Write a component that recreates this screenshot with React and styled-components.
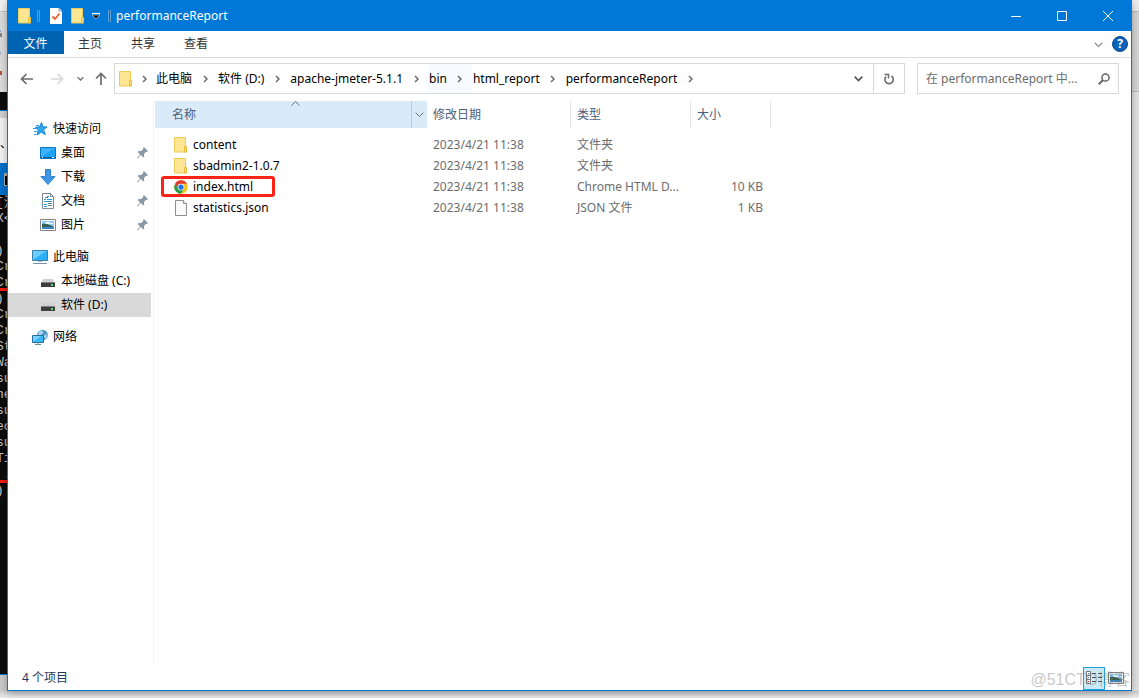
import React, { useState } from "react";
import styled, { createGlobalStyle } from "styled-components";

const quickAccess = [
  { name: "桌面", icon: "desktop" },
  { name: "下载", icon: "download" },
  { name: "文档", icon: "document" },
  { name: "图片", icon: "picture" },
];

const drives = [
  { name: "本地磁盘 (C:)" },
  { name: "软件 (D:)", selected: true },
];

const crumbs = [
  "此电脑", "软件 (D:)", "apache-jmeter-5.1.1", "bin", "html_report", "performanceReport",
];

const files = [
  { name: "content", icon: "folder", date: "2023/4/21 11:38", type: "文件夹", size: "" },
  { name: "sbadmin2-1.0.7", icon: "folder", date: "2023/4/21 11:38", type: "文件夹", size: "" },
  { name: "index.html", icon: "chrome", date: "2023/4/21 11:38", type: "Chrome HTML D...", size: "10 KB", marked: true },
  { name: "statistics.json", icon: "file", date: "2023/4/21 11:38", type: "JSON 文件", size: "1 KB" },
];

const consoleLines = [
  "[注", "X<c", "", ")", "Cr", "Cr", ")", "Cr", "Cr", "St", "Wa", "su", "ne", "su", "ec", "su", "Ti", " .", ")",
];

const FolderIcon = () => (
  <svg width="14" height="16" viewBox="0 0 14 16">
    <path d="M.5.5h11v9h1v5.500h-12z" fill="#ffe693" stroke="#eccb57" />
    <path d="M10.500 15V9.500h2V15z" fill="#ffe07a" stroke="#e6bd3e" />
  </svg>
);

const FileIcon = () => (
  <svg width="14" height="16" viewBox="0 0 14 16">
    <path d="M1.500.5h8l3 3v12h-11z" fill="#fafafa" stroke="#8e8e8e" />
    <path d="M9.500.5v3h3" fill="#fff" stroke="#8e8e8e" />
  </svg>
);

const ChromeIcon = () => (
  <svg width="14" height="14" viewBox="0 0 48 48">
    <circle cx="24" cy="24" r="23" fill="#fbc116" />
    <path d="M4 12.500A23 23 0 0 1 44 12.500H24L14 30z" fill="#e33b2e" />
    <path d="M4 12.500A23 23 0 0 0 24 47L34 30 14 30z" fill="#269b49" />
    <circle cx="24" cy="24" r="11.500" fill="#fff" />
    <circle cx="24" cy="24" r="9" fill="#1a73e8" />
  </svg>
);

const StarIcon = () => (
  <svg width="16" height="16" viewBox="0 0 16 16">
    <path d="M9.500 1.500l1.300 4.300 4.200.2-3.500 2.800 1.800 4.900-4-2.600L5 14l1.300-5L3.500 6.300l4-.4z" fill="#2fa8f4" stroke="#1583cf" />
    <path d="M4 4.500h3M1 7.500h4M2 10.500h3M2 13.500h2" stroke="#2a9de8" />
  </svg>
);

const DesktopIcon = () => (
  <svg width="16" height="16" viewBox="0 0 16 16">
    <path d="M.5 2.500h15v11H.5z" fill="#1ba1f5" stroke="#0b74bd" />
    <path d="M1 3h14L1 12z" fill="#3db3ff" />
    <path d="M1 12.500h14" stroke="#0a5b96" />
    <path d="M2 12.500h1M12 12.500h2" stroke="#fff" />
  </svg>
);

const DownloadIcon = () => (
  <svg width="16" height="16" viewBox="0 0 16 16">
    <path d="M5.500.5h5v7h4.500L8 15.500.9 7.500h4.600z" fill="#3f97e3" stroke="#2e82cf" />
  </svg>
);

const DocumentIcon = () => (
  <svg width="16" height="16" viewBox="0 0 16 16">
    <path d="M2.500.5h8l3 3v12h-11z" fill="#fff" stroke="#7d8a94" />
    <path d="M10.500.5v3h3" fill="none" stroke="#7d8a94" />
    <path d="M7 3.500h2M4 6.500h2M7 6.500h5M4 8.500h8M4 11.500h3M4 13.500h3" stroke="#2e94d8" />
    <path d="M5 4.500h3M8 10.500h4M8 12.500h4" stroke="#668191" />
  </svg>
);

const PictureIcon = () => (
  <svg width="16" height="16" viewBox="0 0 16 16">
    <path d="M.5 2.500h15v11H.5z" fill="#fff" stroke="#858585" />
    <path d="M2 4h12v8H2z" fill="#8fc9ef" />
    <path d="M5 5h5v1h3v1H6z" fill="#e8f5fc" />
    <path d="M2 7c4-1 8 1 12 3v1H2z" fill="#33604e" />
    <path d="M2 10h12v2H2z" fill="#3a86c8" />
  </svg>
);

const ComputerIcon = () => (
  <svg width="16" height="16" viewBox="0 0 16 16">
    <path d="M.5 1.500h15v10H.5z" fill="#2caef8" stroke="#3c7fa8" />
    <path d="M1 2h13L1 11z" fill="#6ccbff" />
    <path d="M6 12.500h4" stroke="#aac0cb" />
    <path d="M1 14.500h14" stroke="#7694a5" />
  </svg>
);

const DriveIcon = () => (
  <svg width="14" height="16" viewBox="0 0 14 16">
    <path d="M2.500 6h9L14 10H0z" fill="#d0d0d0" />
    <path d="M0 9.500h14V14H0z" fill="#3d3d3d" />
    <path d="M0 9.500h14" stroke="#818181" />
    <path d="M10 12h2" stroke="#4ee05a" strokeWidth="2" />
  </svg>
);

const NetworkIcon = () => (
  <svg width="16" height="16" viewBox="0 0 16 16">
    <circle cx="10.500" cy="6" r="5.300" fill="#4a94c3" />
    <path d="M7 2.500q3-2 4 0t-1 3l-4 1zM11 7l4-2-1 5z" fill="#a8d6ed" />
    <path d="M.5 6.500h11v7H.5z" fill="#3cb6f7" stroke="#246f9f" />
    <path d="M1 7h8l-8 6z" fill="#7bd1ff" />
    <path d="M3 15.500h6M5 14h2" stroke="#668b9f" />
  </svg>
);

const PinIcon = () => (
  <svg width="11" height="12" viewBox="0 0 11 12">
    <path d="M7 0l4 4-1 1-1-.3L7 7l.2 2.500-1 1-2.500-2.500L.7 11.300 0 11.500l.2-.8L3 7.500.7 5l1-1L4.200 4l2-2L6 1z" fill="#8c99a5" />
  </svg>
);

const ChevronRight = () => (
  <svg width="5" height="8" viewBox="0 0 5 8">
    <path d="M1 1l3 3-3 3" fill="none" stroke="#6b6b6b" strokeWidth="1.500" />
  </svg>
);

const ChevronDown = ({ color = "#6b6b6b", size = 9, weight = 1 }) => (
  <svg width={size} height={size} viewBox="0 0 9 9">
    <path d="M.7 2.700L4.500 6.500l3.800-3.800" fill="none" stroke={color} strokeWidth={weight} />
  </svg>
);

const ArrowIcon = ({ color = "#6d6d6d", turn = 0 }) => (
  <svg width="14" height="14" viewBox="0 0 14 14">
    <path
      d="M13 7H2M6.500 2L1.500 7l5 5"
      fill="none"
      stroke={color}
      strokeWidth="1.700"
      transform={`rotate(${turn} 7 7)`}
    />
  </svg>
);

const RefreshIcon = () => (
  <svg width="12" height="12" viewBox="0 0 12 12">
    <path d="M8.500 3A4.200 4.200 0 1 1 3 3.600" fill="none" stroke="#6b6b6b" strokeWidth="1.600" />
    <path d="M1.500 1.500h4v4" fill="none" stroke="#6b6b6b" strokeWidth="1.500" />
  </svg>
);

const SearchIcon = () => (
  <svg width="12" height="12" viewBox="0 0 12 12">
    <circle cx="7.500" cy="4.500" r="3.600" fill="none" stroke="#666" strokeWidth="1.500" />
    <path d="M5 7L.8 11.200" stroke="#666" strokeWidth="2" />
  </svg>
);

const icons = {
  folder: FolderIcon,
  file: FileIcon,
  chrome: ChromeIcon,
  desktop: DesktopIcon,
  download: DownloadIcon,
  document: DocumentIcon,
  picture: PictureIcon,
};

export default function App() {
  const [query, setQuery] = useState("");
  const [view, setView] = useState("details");

  return (
    <Desktop>
      <GlobalStyle />
      <Backdrop aria-hidden="true">
        <BackPanel>
          <svg width="3" height="46" viewBox="0 0 3 46">
            <path d="M0 1h1" stroke="#8fa6c0" strokeWidth="2" />
            <path d="M0 5h2" stroke="#858585" strokeWidth="4" />
            <path d="M0 23h1" stroke="#aab4cc" strokeWidth="4" />
            <path d="M0 43h2" stroke="#b5543c" strokeWidth="4" />
          </svg>
        </BackPanel>
        <BackTop />
        <BackPage>、</BackPage>
        <BackTitle><i /></BackTitle>
        <Console>
          {consoleLines.map((line, i) => (
            <ConsoleLine key={i} $underlined={i === 5 || i === 17}>{line}</ConsoleLine>
          ))}
        </Console>
      </Backdrop>

      <Window>
        <TitleBar>
          <FolderIcon />
          <Separator />
          <QuickTool aria-label="属性">
            <svg width="14" height="16" viewBox="0 0 14 16">
              <path d="M1 0h9l3 3v13H1z" fill="#fff" />
              <path d="M10 0v3h3" fill="none" stroke="#8e8e8e" />
              <path d="M3.500 8.500l2.500 2.500 4.500-5.500" fill="none" stroke="#e8602c" strokeWidth="1.800" />
            </svg>
          </QuickTool>
          <QuickTool aria-label="新建文件夹"><FolderIcon /></QuickTool>
          <QuickTool $small aria-label="自定义快速访问工具栏">
            <svg width="8" height="8" viewBox="0 0 8 8">
              <path d="M0 1.500h8" stroke="#fff" />
              <path d="M0 3h8L4 7z" fill="#111" stroke="#fff" strokeWidth=".500" />
            </svg>
          </QuickTool>
          <Separator />
          <Title>performanceReport</Title>
          <WindowButton aria-label="最小化">
            <svg width="10" height="10" viewBox="0 0 10 10"><path d="M0 5.500h10" stroke="#fff" /></svg>
          </WindowButton>
          <WindowButton aria-label="最大化">
            <svg width="10" height="10" viewBox="0 0 10 10"><path d="M.5.5h9v9h-9z" fill="none" stroke="#fff" /></svg>
          </WindowButton>
          <WindowButton aria-label="关闭">
            <svg width="10" height="10" viewBox="0 0 10 10"><path d="M0 0l10 10M10 0L0 10" stroke="#fff" /></svg>
          </WindowButton>
        </TitleBar>

        <Ribbon>
          <Tab $file>文件</Tab>
          <Tab>主页</Tab>
          <Tab>共享</Tab>
          <Tab>查看</Tab>
          <RibbonEnd>
            <IconButton aria-label="展开功能区"><ChevronDown color="#999" weight={1.4} /></IconButton>
            <HelpButton aria-label="帮助">?</HelpButton>
          </RibbonEnd>
        </Ribbon>

        <NavBar>
          <NavButtons>
            <IconButton aria-label="后退"><ArrowIcon /></IconButton>
            <IconButton aria-label="前进"><ArrowIcon color="#d8d8d8" turn={180} /></IconButton>
            <RecentGroup>
              <IconButton aria-label="最近浏览的位置"><ChevronDown size={7} weight={1.7} /></IconButton>
              <IconButton aria-label="上移"><ArrowIcon turn={90} /></IconButton>
            </RecentGroup>
          </NavButtons>
          <AddressBox>
            <FolderIcon />
            <Arrow><ChevronRight /></Arrow>
            {crumbs.map((crumb) => (
              <Crumb key={crumb} $hover={crumb === "bin"}>
                <button>{crumb}</button>
                <Arrow $wide><ChevronRight /></Arrow>
              </Crumb>
            ))}
            <DropButton aria-label="以前的位置"><ChevronDown weight={1.7} color="#555" /></DropButton>
            <RefreshButton aria-label="刷新"><RefreshIcon /></RefreshButton>
          </AddressBox>
          <SearchBox>
            <input
              type="text"
              aria-label="搜索"
              placeholder="在 performanceReport 中..."
              value={query}
              onChange={(e) => setQuery(e.target.value)}
            />
            <SearchIcon />
          </SearchBox>
        </NavBar>

        <Body>
          <Sidebar>
            <Group>
              <SideItem><StarIcon />快速访问</SideItem>
              {quickAccess.map((item) => {
                const Icon = icons[item.icon];
                return (
                  <SideItem key={item.name} $nested>
                    <Icon />
                    <span>{item.name}</span>
                    <PinIcon />
                  </SideItem>
                );
              })}
            </Group>
            <Group>
              <SideItem><ComputerIcon />此电脑</SideItem>
              {drives.map((drive) => (
                <SideItem key={drive.name} $nested $selected={drive.selected}>
                  <DriveSlot><DriveIcon /></DriveSlot>
                  {drive.name}
                </SideItem>
              ))}
            </Group>
            <Group>
              <SideItem><NetworkIcon />网络</SideItem>
            </Group>
          </Sidebar>

          <Main>
            <FileTable>
              <colgroup>
                <col width="272" />
                <col width="144" />
                <col width="120" />
                <col width="80" />
              </colgroup>
              <thead>
                <tr>
                  <HeadCell $sorted>
                    <SortMark>
                      <svg width="9" height="5" viewBox="0 0 9 5"><path d="M.5 4.500l4-4 4 4" fill="none" stroke="#6b6b6b" /></svg>
                    </SortMark>
                    <HeadInner>
                      <span>名称</span>
                      <FilterButton aria-label="筛选"><ChevronDown /></FilterButton>
                    </HeadInner>
                  </HeadCell>
                  <HeadCell>修改日期</HeadCell>
                  <HeadCell>类型</HeadCell>
                  <HeadCell>大小</HeadCell>
                </tr>
              </thead>
              <tbody>
                {files.map((file) => {
                  const Icon = icons[file.icon];
                  return (
                    <tr key={file.name}>
                      <NameCell>
                        <FileName $marked={file.marked}><Icon />{file.name}</FileName>
                      </NameCell>
                      <Cell>{file.date}</Cell>
                      <Cell>{file.type}</Cell>
                      <Cell $right>{file.size}</Cell>
                    </tr>
                  );
                })}
              </tbody>
            </FileTable>
          </Main>
        </Body>

        <StatusBar>
          <span>4 个项目</span>
          <ViewButtons>
            <ViewButton aria-label="详细信息" $active={view === "details"} onClick={() => setView("details")}>
              <svg width="16" height="14" viewBox="0 0 16 14">
                <path d="M.5.5h4v12h-4zM.5 4.500h4M.5 8.500h4" fill="#fff" stroke="#777" />
                <path d="M6 2.500h4M12 2.500h4M6 6.500h4M12 6.500h4M6 10.500h4M12 10.500h4" stroke="#555" />
                <path d="M2 2.500h1M2 6.500h1" stroke="#337ec0" />
                <path d="M2 10.500h1" stroke="#d22" />
              </svg>
            </ViewButton>
            <ViewButton aria-label="大图标" $active={view === "icons"} onClick={() => setView("icons")}>
              <PictureIcon />
            </ViewButton>
          </ViewButtons>
        </StatusBar>
      </Window>

      <RightEdge aria-hidden="true" />
      <Watermark>@51CTO博客</Watermark>
    </Desktop>
  );
}

const GlobalStyle = createGlobalStyle`
  * {
    box-sizing: border-box;
  }

  body {
    margin: 0;
    overflow: hidden;
    background: #e4e4e4;
  }

  body, button, input {
    font-family: "Noto Sans", "Noto Sans CJK SC", sans-serif;
    font-size: 12px;
    line-height: 16px;
  }

  button {
    margin: 0;
    padding: 0;
    border: none;
    background: none;
    color: inherit;
  }

  svg {
    display: block;
    flex: none;
  }
`;

const Desktop = styled.div`
  position: relative;
  display: grid;
  grid-template-columns: 7px minmax(0, 1fr) 7px;
  height: 100vh;
  padding-bottom: 7px;
  background: linear-gradient(to top, #ededed, #c9c9c9 8px);
`;

const Backdrop = styled.div`
  display: flex;
  flex-direction: column;
  min-width: 0;
  padding-bottom: 16px;
`;

const BackPanel = styled.div`
  height: 92px;
  flex: none;
  padding-top: 30px;
  background: linear-gradient(#f0f0f0 11px, #c4c4c4 11px, #c4c4c4 12px, #dcdcdc 12px);
`;

const BackTop = styled.div`
  height: 26px;
  flex: none;
  background: linear-gradient(#0c0c0c 18px, #0078d7 18px, #0078d7 19px, #d0d0d0 19px);
`;

const BackPage = styled.div`
  height: 45px;
  flex: none;
  padding-top: 18px;
  background: #f3f3f3;
`;

const BackTitle = styled.div`
  height: 32px;
  flex: none;
  padding: 10px 0 0 4px;
  background: #0070c9;

  i {
    display: block;
    width: 16px;
    height: 13px;
    border: 1px solid #aaa;
    border-top-width: 3px;
    background: #000;
  }
`;

const Console = styled.div`
  flex: 1;
  background: #0c0c0c;
  border-bottom: 1px solid #0078d7;
  color: #c4c4c4;
`;

const ConsoleLine = styled.div`
  height: 16px;
  border-bottom: ${(p) => (p.$underlined ? "3px solid #f01c12" : "none")};
  font-family: "Liberation Mono", "Noto Sans CJK SC", monospace;
  font-size: 13px;
  text-indent: -4px;
  white-space: pre;
`;

/* sits on top of the console behind it */
const Window = styled.section`
  display: flex;
  flex-direction: column;
  min-width: 0;
  z-index: 1;
  background: #fff;
  border: 1px solid #0078d7;
  border-top: none;
  box-shadow: 0 2px 8px rgba(0, 0, 0, 0.3);
`;

const TitleBar = styled.header`
  display: flex;
  align-items: center;
  height: 31px;
  flex: none;
  padding-left: 10px;
  background: #0078d7;
  color: #fff;
`;

const Separator = styled.span`
  width: 3px;
  height: 12px;
  margin: 0 5px;
  border: 1px solid #5e9fd6;
  border-width: 0 1px;
`;

const QuickTool = styled.button`
  display: flex;
  justify-content: center;
  width: ${(p) => (p.$small ? "14px" : "22px")};
`;

const Title = styled.span`
  flex: 1;
`;

const WindowButton = styled.button`
  display: flex;
  align-items: center;
  justify-content: center;
  width: 46px;
  height: 31px;
`;

const Ribbon = styled.nav`
  display: flex;
  align-items: flex-start;
  height: 27px;
  flex: none;
  border-bottom: 1px solid #dadbdc;
  color: #333;
`;

const Tab = styled.button`
  width: ${(p) => (p.$file ? "56px" : "53px")};
  height: 23px;
  padding: 2px 1px 0 0;
  background: ${(p) => (p.$file ? "#0063b1" : "none")};
  color: ${(p) => (p.$file ? "#fff" : "inherit")};
`;

const RibbonEnd = styled.div`
  display: flex;
  align-items: center;
  gap: 9px;
  height: 26px;
  margin-left: auto;
  padding-right: 3px;
`;

const IconButton = styled.button`
  display: flex;
`;

const HelpButton = styled.button`
  width: 16px;
  height: 16px;
  border: 1px solid #0a4a86;
  border-radius: 50%;
  background: #0a64bd;
  color: #fff;
  font-weight: bold;
  line-height: 14px;
`;

const NavBar = styled.div`
  display: flex;
  align-items: center;
  height: 43px;
  flex: none;
  padding: 0 12px 2px 0;
`;

const NavButtons = styled.div`
  display: flex;
  align-items: center;
  gap: 16px;
  width: 106px;
  padding-left: 12px;
`;

const RecentGroup = styled.span`
  display: flex;
  align-items: center;
  gap: 10px;
  margin-left: -3px;
`;

const AddressBox = styled.div`
  display: flex;
  align-items: center;
  flex: 1;
  min-width: 0;
  height: 31px;
  padding-left: 4px;
  border: 1px solid #d9d9d9;
  color: #000;
`;

const Arrow = styled.span`
  display: flex;
  justify-content: center;
  width: ${(p) => (p.$wide ? "24px" : "22px")};
`;

const Crumb = styled.span`
  display: flex;
  align-items: center;
  height: 29px;
  background: ${(p) => (p.$hover ? "#f7fbff" : "none")};

  button {
    padding: 0 1px;
    white-space: nowrap;
  }
`;

const DropButton = styled.button`
  display: flex;
  align-items: center;
  justify-content: center;
  width: 30px;
  height: 29px;
  margin-left: auto;
`;

const RefreshButton = styled.button`
  display: flex;
  align-items: center;
  justify-content: center;
  width: 31px;
  height: 29px;
  border-left: 1px solid #d9d9d9;
`;

const SearchBox = styled.label`
  display: flex;
  align-items: center;
  width: 202px;
  height: 31px;
  margin-left: 12px;
  padding: 0 8px;
  border: 1px solid #d9d9d9;

  input {
    flex: 1;
    min-width: 0;
    padding: 0;
    border: none;
    outline: none;
    color: #000;
  }

  input::placeholder {
    color: #6d6d6d;
  }
`;

const Body = styled.div`
  display: flex;
  flex: 1;
  min-height: 0;
`;

const Sidebar = styled.aside`
  width: 146px;
  flex: none;
  padding: 16px 2px 0 0;
  border-right: 1px solid #f3f3f3;
`;

const Group = styled.div`
  margin-bottom: 8px;
`;

const SideItem = styled.div`
  display: flex;
  align-items: center;
  gap: 5px;
  height: 24px;
  padding: 0 3px 0 ${(p) => (p.$nested ? "32px" : "24px")};
  background: ${(p) => (p.$selected ? "#d9d9d9" : "none")};
  color: #000;
  white-space: nowrap;

  span + svg {
    margin-left: auto;
  }
`;

const DriveSlot = styled.span`
  display: flex;
  justify-content: center;
  width: 16px;
`;

const Main = styled.main`
  flex: 1;
  min-width: 0;
  padding-left: 1px;
`;

const FileTable = styled.table`
  width: 616px;
  table-layout: fixed;
  border-collapse: separate;
  border-spacing: 0;

  thead::after {
    content: "";
    display: table-row;
    height: 6px;
  }
`;

const HeadCell = styled.th`
  position: relative;
  height: 27px;
  padding: 0 0 0 ${(p) => (p.$sorted ? "17px" : "6px")};
  border-right: ${(p) => (p.$sorted ? "none" : "1px solid #e5e5e5")};
  background: ${(p) => (p.$sorted ? "#d9ebf9" : "none")};
  color: #4c607a;
  font-weight: normal;
  text-align: left;
`;

const SortMark = styled.span`
  position: absolute;
  top: 0;
  left: 50%;
`;

const HeadInner = styled.div`
  display: flex;
  align-items: center;
  justify-content: space-between;
`;

const FilterButton = styled.button`
  display: flex;
  align-items: center;
  justify-content: center;
  width: 16px;
  height: 27px;
  border-left: 1px solid #b9cfdf;
`;

const Cell = styled.td`
  height: 21px;
  padding: 0 8px 0 6px;
  overflow: hidden;
  color: #6d6d6d;
  text-align: ${(p) => (p.$right ? "right" : "left")};
  text-overflow: ellipsis;
  white-space: nowrap;
`;

const NameCell = styled.td`
  height: 21px;
  padding: 0 0 0 6px;
`;

const FileName = styled.span`
  display: flex;
  align-items: center;
  gap: 5px;
  width: 114px;
  height: 21px;
  padding-left: 10px;
  border: 3px solid ${(p) => (p.$marked ? "#fb2315" : "transparent")};
  border-radius: 3px;
  color: #000;
  white-space: nowrap;
`;

const StatusBar = styled.footer`
  display: flex;
  align-items: center;
  justify-content: space-between;
  height: 24px;
  flex: none;
  padding-left: 14px;
  color: #1e395b;
`;

const ViewButtons = styled.div`
  display: flex;
  padding-right: 4px;
`;

const ViewButton = styled.button`
  display: flex;
  align-items: center;
  justify-content: center;
  width: 22px;
  height: 23px;
  border: 1px solid ${(p) => (p.$active ? "#26a0da" : "transparent")};
  background: ${(p) => (p.$active ? "#cbe8f6" : "none")};
`;

const RightEdge = styled.div`
  background: linear-gradient(#ececec 11px, #bcbcbc 11px, #bcbcbc 12px, #d6d6d4 12px, #d6d6d4 91px, #bcbcbc 91px, #bcbcbc 92px, #e2e2e2 92px);
`;

const Watermark = styled.span`
  position: absolute;
  right: 9px;
  bottom: 8px;
  z-index: 2;
  color: rgba(110, 110, 110, 0.4);
  font-family: "Liberation Sans", "Noto Sans CJK SC", sans-serif;
  font-size: 16px;
  line-height: 20px;
  pointer-events: none;
`;
